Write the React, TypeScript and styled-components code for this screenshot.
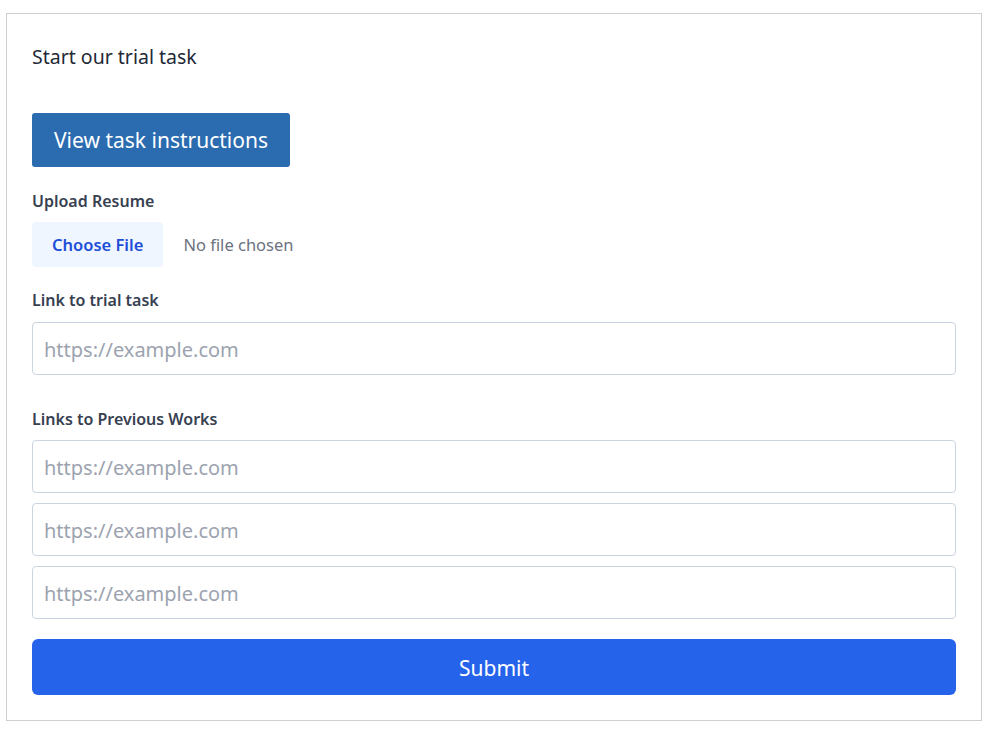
import styled, { createGlobalStyle } from "styled-components";

const GlobalStyle = createGlobalStyle`
  body {
    margin: 0;
    background: #fff;
    font-family: "Noto Sans", "Open Sans", sans-serif;
    color: #1f2937;
  }
`;

const Card = styled.div`
  box-sizing: border-box;
  margin: 13px 4px 0 6px;
  width: 976px;
  border: 1px solid #cfcfcf;
  padding: 25px 25px 25px 25px;
  display: flex;
  flex-direction: column;
`;

const Title = styled.h2`
  margin: 0;
  font-size: 19.5px;
  font-weight: 400;
  line-height: 36px;
  color: #1f2937;
`;

const InstructionsButton = styled.button`
  align-self: flex-start;
  margin-top: 38px;
  height: 54px;
  padding: 0 22px;
  border: none;
  border-radius: 3px;
  background: #2b6cb0;
  color: #fff;
  font-family: inherit;
  font-size: 21px;
  cursor: pointer;
`;

const Label = styled.label<{ $gap: number }>`
  display: block;
  margin-top: ${(p) => p.$gap}px;
  font-size: 16px;
  font-weight: 600;
  line-height: 24px;
  color: #374151;
`;

const FileInput = styled.input`
  margin-top: 9px;
  height: 45px;
  font-family: inherit;
  font-size: 16.5px;
  color: #6b7280;

  &::file-selector-button {
    height: 45px;
    margin-right: 20px;
    padding: 0 20px;
    border: none;
    border-radius: 4px;
    background: #eff6ff;
    color: #1d4ed8;
    font-family: inherit;
    font-size: 16.5px;
    font-weight: 600;
    cursor: pointer;
  }
`;

const LinkList = styled.div<{ $top: number }>`
  margin-top: ${(p) => p.$top}px;
  display: flex;
  flex-direction: column;
  gap: 10px;
`;

const TextInput = styled.input`
  box-sizing: border-box;
  width: 100%;
  height: 53px;
  padding: 2px 11px 0;
  border: 1px solid #cbd5e1;
  border-radius: 4px;
  font-family: inherit;
  font-size: 20px;
  color: #1f2937;
  outline: none;

  &::placeholder {
    color: #9ca3af;
  }
`;

const SubmitButton = styled.button`
  margin-top: 20px;
  width: 100%;
  height: 56px;
  padding-top: 2px;
  border: none;
  border-radius: 6px;
  background: #2563eb;
  color: #fff;
  font-family: inherit;
  font-size: 21px;
  cursor: pointer;
`;

const App = (): JSX.Element => {
  const works = [0, 1, 2];

  return (
    <>
      <GlobalStyle />
      <Card>
        <Title>Start our trial task</Title>
        <InstructionsButton type="button">View task instructions</InstructionsButton>

        <Label $gap={22} htmlFor="resume">Upload Resume</Label>
        <FileInput id="resume" type="file" />

        <Label $gap={21} htmlFor="trial">Link to trial task</Label>
        <LinkList $top={10}>
          <TextInput id="trial" type="url" placeholder="https://example.com" />
        </LinkList>

        <Label $gap={32}>Links to Previous Works</Label>
        <LinkList $top={9}>
          {works.map((i) => (
            <TextInput key={i} type="url" placeholder="https://example.com" />
          ))}
        </LinkList>

        <SubmitButton type="submit">Submit</SubmitButton>
      </Card>
    </>
  );
};

export default App;
